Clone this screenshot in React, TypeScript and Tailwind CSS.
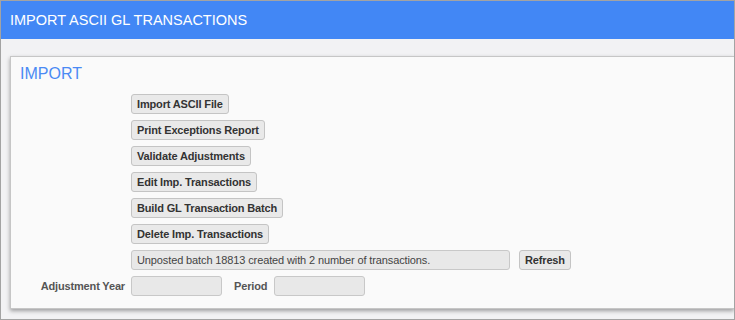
import React from "react";

const actions = [
  "Import ASCII File",
  "Print Exceptions Report",
  "Validate Adjustments",
  "Edit Imp. Transactions",
  "Build GL Transaction Batch",
  "Delete Imp. Transactions",
];

const btn =
  "h-[20px] w-fit px-[5px] flex items-center rounded-[3px] border border-[#c4c4c4] bg-[#e9e9e9] text-[11px] font-bold tracking-[-0.15px] text-[#333] leading-none";

const App: React.FC = () => {
  return (
    <div className="w-[735px] h-[320px] border border-[#a3a3a3] bg-[#f2f2f4] font-['Liberation_Sans',Arial,sans-serif] flex flex-col overflow-hidden">
      {/* header */}
      <div className="h-[38px] shrink-0 bg-[#4287f5] text-white text-[14.5px] pl-[9px] pt-[1px] flex items-center">
        IMPORT ASCII GL TRANSACTIONS
      </div>

      <div className="pt-[17px] pl-[9px]">
        <div className="h-[253px] border-t border-l border-b border-[#c6c6c6] bg-[#fafafa] shadow-[0_2px_4px_rgba(0,0,0,0.35)] pl-[9px] pt-[8px] flex flex-col">
          <div className="text-[16px] leading-[18px] text-[#4a8af4]">IMPORT</div>

          <div className="mt-[11px] flex flex-col gap-[6px]">
            {actions.map((a) => (
              <div key={a} className="pl-[111px]">
                <button className={btn}>{a}</button>
              </div>
            ))}

            <div className="pl-[111px] flex gap-[9px]">
              <div className="h-[20px] w-[379px] px-[5px] flex items-center rounded-[3px] border border-[#c8c8c8] bg-[#e8e8e8] text-[11px] tracking-[-0.12px] text-[#444]">
                Unposted batch 18813 created with 2 number of transactions.
              </div>
              <button className={btn}>Refresh</button>
            </div>

            <div className="flex items-center">
              <span className="w-[105px] mr-[6px] text-right text-[11px] font-bold tracking-[-0.15px] text-[#555]">
                Adjustment Year
              </span>
              <div className="h-[20px] w-[91px] rounded-[3px] border border-[#c8c8c8] bg-[#e8e8e8]" />
              <span className="ml-[12px] mr-[7px] text-[11px] font-bold tracking-[-0.15px] text-[#555]">Period</span>
              <div className="h-[20px] w-[91px] rounded-[3px] border border-[#c8c8c8] bg-[#e8e8e8]" />
            </div>
          </div>
        </div>
      </div>
    </div>
  );
};

export default App;
